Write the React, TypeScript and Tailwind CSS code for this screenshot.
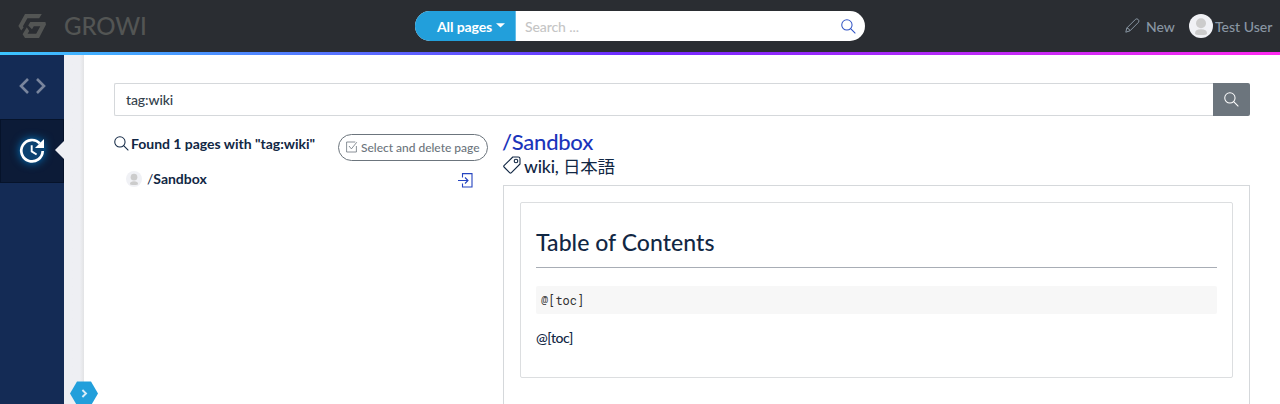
import React from "react";

function Logo() {
  return (
    <svg className="ml-[18px] h-[24px] w-[28px] shrink-0" viewBox="0 0 28 24" fill="#535554">
      <path d="M7 0H23.8L21.2 4.2H9.4L4.9 12.2L5.6 13.4L3.2 16.6L0.4 12Z" />
      <path d="M12.2 8H27.4L28 10.4L21 24H7L4.6 20.2L8.8 13.2L11.2 17L9.6 19.8H18.2L22.3 12.2H15.8L14 15.2L10.2 11.4Z" />
    </svg>
  );
}

function Magnifier({ className }: { className: string }) {
  return (
    <svg className={className} viewBox="0 0 16 16" fill="none" stroke="currentColor" strokeWidth="1.1">
      <circle cx="6.3" cy="6.3" r="5.5" />
      <path d="M10.3 10.3L15.3 15.3" />
    </svg>
  );
}

function Pencil() {
  return (
    <svg className="mb-[2px] h-[15px] w-[15px]" viewBox="0 0 15 15" fill="none" stroke="currentColor" strokeWidth="1" strokeLinejoin="round">
      <path d="M0.8 14.2L1.8 10L10.5 1.3Q11.9 0.2 13.2 1.5T13.6 4.2L5 12.8Z" />
      <path d="M1.8 10Q4.3 10.4 5 12.8" />
    </svg>
  );
}

function Avatar({ className }: { className: string }) {
  return (
    <svg className={className} viewBox="0 0 24 24">
      <circle cx="12" cy="12" r="12" fill="#f0f1f5" />
      <circle cx="12" cy="9.2" r="5" fill="#ccc" />
      <path d="M6 19.4Q6 15.2 12 15.2T18 19.4Q18 21 12 21T6 19.4Z" fill="#ccc" />
    </svg>
  );
}

function Header() {
  return (
    <header className="shrink-0">
      <div className="flex h-[52px] items-center bg-[#2a2d32]">
        <div className="flex w-[415px] items-center">
          <Logo />
          <span className="ml-[18px] text-[24px] leading-none font-medium tracking-[-0.1px] text-[#535554]">GROWI</span>
        </div>
        <div className="flex h-[30px] w-[450px] overflow-hidden rounded-full bg-white">
          <button className="flex w-[101px] items-center border-r border-[#64bde8] bg-[#229fdb] pl-[22px] text-[14px] font-bold tracking-[-0.1px] whitespace-nowrap text-white">
            All pages
            <svg className="mb-[2px] ml-1 h-[5px] w-[9px]" viewBox="0 0 8 5" preserveAspectRatio="none" fill="currentColor"><path d="M0 0.3H8L4 4.5Z" /></svg>
          </button>
          <span className="flex flex-1 items-center pl-[9px] text-[14px] font-medium tracking-[-0.1px] text-[#c5c5c5]">Search ...</span>
          <Magnifier className="mt-[8px] mr-[9px] h-[15px] w-[15px] text-[#2f52c4]" />
        </div>
        <div className="ml-[260px] flex items-center text-[14px] font-medium text-[#8996a3]">
          <Pencil />
          <span className="ml-[6px] w-[43px]">New</span>
          <Avatar className="h-6 w-6" />
          <span className="ml-[2px] whitespace-nowrap">Test User</span>
        </div>
      </div>
      <div className="h-[3px] bg-linear-to-r/srgb from-[#3bc5ff] via-[#7029ff] to-[#ff2af0]" />
    </header>
  );
}

function Sidebar() {
  return (
    <nav className="w-16 shrink-0 bg-[#142b55]">
      <div className="flex h-16 items-center justify-center pb-[2px] text-[#79859d]">
        <svg className="h-[16px] w-[27px]" viewBox="0 0 27 16" fill="none" stroke="currentColor" strokeWidth="2.6">
          <path d="M9 1L2 8L9 15M18 1L25 8L18 15" />
        </svg>
      </div>
      <div className="flex h-16 items-center border border-[#06132a] bg-[#0c1b37]">
        <svg className="ml-[16px] h-[30px] w-[30px] overflow-visible drop-shadow-[0_0_5px_#007bc8]" viewBox="0 0 30 30" fill="none" stroke="white">
          <circle cx="15" cy="15" r="11" fill="#0b4170" stroke="none" />
          <path d="M22.8 7.4A10.7 10.7 0 1 0 25.7 15" strokeWidth="2.7" />
          <path d="M27 3V12H18Z" fill="white" stroke="none" />
          <path d="M14.7 9.3V15.4L19.6 18.5" strokeWidth="1.9" />
        </svg>
        <svg className="mr-[-1px] mb-[2px] ml-auto h-[18px] w-[9px]" viewBox="0 0 9 18" fill="#eeeff3"><path d="M0 9L9 0V18Z" /></svg>
      </div>
    </nav>
  );
}

function Results() {
  return (
    <section className="w-[389px] shrink-0">
      <div className="flex h-[27px]">
        <Magnifier className="mt-[2px] h-[15px] w-[15px]" />
        <h1 className="ml-[2px] w-[207px] text-[14px] leading-[19px] font-bold tracking-[-0.02px] whitespace-nowrap">Found 1 pages with "tag:wiki"</h1>
        <button className="flex h-[27px] w-[150px] items-center rounded-full border border-[#6c757d] pl-[7px] text-[12px] font-medium tracking-[-0.02px] whitespace-nowrap text-[#6c757d]">
          <svg className="mr-[3px] mb-[2px] h-[12px] w-[12px] shrink-0" viewBox="0 0 12 12" fill="none" stroke="currentColor" strokeWidth="0.8">
            <path d="M9.3 1H0.6V11H10.4V5M3 5L5.4 7.9L10.8 1.2" />
          </svg>
          Select and delete page
        </button>
      </div>
      <div className="mt-[10px] flex h-4 w-[359px] items-center pl-[12px]">
        <Avatar className="h-4 w-4" />
        <span className="ml-[5px] text-[14px] leading-4">/<b className="tracking-[-0.02px]">Sandbox</b></span>
        <svg className="mt-[2px] ml-auto h-[15px] w-[15px]" viewBox="0 0 15 15" fill="none" stroke="#2544c0" strokeWidth="1.1">
          <path d="M4.5 4.5V0.6H14V14H4.5V10.5M0 7.5H10M7 4.5L10 7.5L7 10.5" />
        </svg>
      </div>
    </section>
  );
}

function Article() {
  return (
    <article className="flex min-w-0 flex-1 flex-col">
      <h2 className="ml-[-1px] h-[23px] text-[22px] leading-[15px] font-medium tracking-[-0.25px] text-[#1b35bb]">/Sandbox</h2>
      <div className="flex h-[28px] items-start">
        <svg className="mt-[-1px] h-[18px] w-[18px]" viewBox="0 0 18 18" fill="none" stroke="currentColor" strokeWidth="1.1" strokeLinejoin="round">
          <path d="M9.8 1H15.2Q17 1 17 2.8V8L8.2 16.8Q7.5 17.4 6.8 16.8L1 11Q0.4 10.3 1 9.6Z" />
          <circle cx="13" cy="5" r="1.8" />
        </svg>
        <span className="ml-[3px] text-[17.5px] leading-[20px] font-medium tracking-[-0.15px]">wiki, <span className="font-normal">日本語</span></span>
      </div>
      <div className="min-h-0 flex-1 border border-b-0 border-[#d5d8db] p-4">
        <div className="h-[176px] rounded-[2px] border border-[#dcdee0] px-[15px]">
          <h2 className="h-[65px] border-b border-[#a8adb5] pt-[25px] text-[23px] leading-[28px] font-medium tracking-[0.05px]">Table of Contents</h2>
          <pre className="mt-[18px] h-7 rounded-[2px] bg-[#f7f7f7] pl-[5px] font-['Roboto_Mono','Liberation_Mono',monospace] text-[12px] leading-[28px] text-[#333]">@[toc]</pre>
          <p className="mt-[14px] text-[14px] leading-[20px] font-medium tracking-[-0.4px]">@[toc]</p>
        </div>
      </div>
    </article>
  );
}

export default function App() {
  return (
    <div className="flex h-[404px] w-[1280px] flex-col overflow-hidden bg-white font-['Lato','Noto_Sans_CJK_JP',sans-serif] text-[#112744]">
      <Header />
      <div className="flex min-h-0 flex-1">
        <Sidebar />
        <div className="relative w-5 shrink-0 bg-linear-to-r from-[#eeeff3] from-80% to-[#e2e3e5]">
          <svg className="absolute top-[326px] left-[6px] h-[24px] w-[28px]" viewBox="0 0 28 24">
            <path d="M7 0.5H21L28 12.5L21 24.5H7L0 12.5Z" fill="#229fdb" />
            <path d="M12.4 9L16 12.5L12.4 16" fill="none" stroke="#d8edf8" strokeWidth="1.9" />
          </svg>
        </div>
        <main className="flex min-w-0 flex-1 flex-col pt-[28px] pr-[30px] pl-[30px]">
          <div className="flex h-[33px] shrink-0">
            <div className="flex flex-1 items-center rounded-l-[2px] border border-r-0 border-[#d5d8db] pl-[11px] text-[14px] font-medium tracking-[-0.1px] text-[#33414c]">tag:wiki</div>
            <button className="flex w-[37px] items-center justify-center rounded-r-[2px] bg-[#6c757d] text-white"><Magnifier className="h-[15px] w-[15px]" /></button>
          </div>
          <div className="flex min-h-0 flex-1 pt-[18px]">
            <Results />
            <Article />
          </div>
        </main>
      </div>
    </div>
  );
}
